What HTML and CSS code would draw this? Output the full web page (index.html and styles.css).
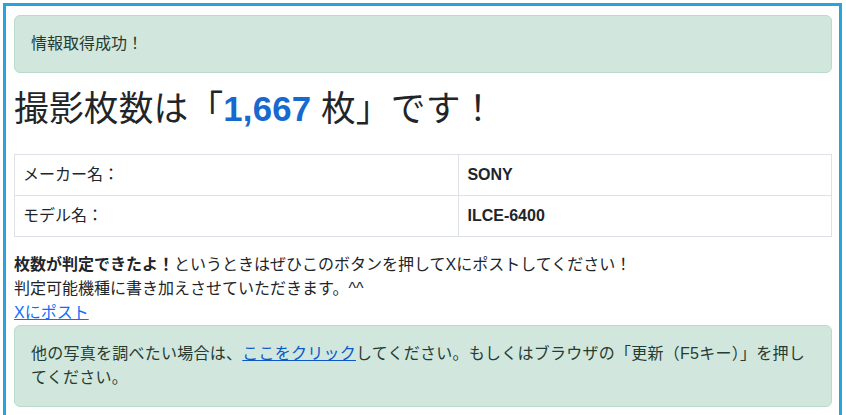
FILE: index.html
```html
<!DOCTYPE html>
<html lang="ja">
<head>
<meta charset="utf-8">
<title>撮影枚数</title>
<link rel="stylesheet" href="styles.css">
</head>
<body>
<div class="frame">
  <div class="alert">情報取得成功！</div>
  <h1 class="count">撮影枚数は「<span class="num">1,667</span> 枚」です！</h1>
  <table class="info">
    <tr><td>メーカー名：</td><th>SONY</th></tr>
    <tr><td>モデル名：</td><th>ILCE-6400</th></tr>
  </table>
  <p class="note"><b>枚数が判定できたよ！</b>というときはぜひこのボタンを押してXにポストしてください！<br>判定可能機種に書き加えさせていただきます。^^<br><a href="#">Xにポスト</a></p>
  <div class="alert alert-wide">他の写真を調べたい場合は、<a href="#">ここをクリック</a>してください。もしくはブラウザの「更新（F5キー）」を押してください。</div>
</div>
</body>
</html>
```

FILE: styles.css
```css
html, body {
  margin: 0;
  padding: 0;
  background: #fff;
}
body {
  font-family: "Liberation Sans", "Noto Sans CJK JP", sans-serif;
  font-size: 16px;
  line-height: 1.5;
  color: #212529;
}
.frame {
  margin: 3px 0 0 3px;
  width: 818px;
  height: 420px;
  border: 3px solid #29a3dc;
  border-bottom: none;
  padding: 9px 7px 0 8px;
  box-sizing: content-box;
  overflow: hidden;
}
.alert {
  background: #d1e7dd;
  border: 1px solid #badbcc;
  border-radius: 6px;
  padding: 16px;
  color: #263b31;
  margin-bottom: 16px;
}
.alert-wide {
  letter-spacing: 0.25px;
}
.alert a {
  color: #0a58ca;
}
.count {
  font-size: 34.7px;
  font-weight: 400;
  line-height: 1.2;
  margin: 2px 0 23px;
  color: #212529;
  letter-spacing: 0.2px;
}
.num {
  color: #1769cf;
  font-weight: 700;
}
.info {
  width: 100%;
  border-collapse: collapse;
  margin-bottom: 16px;
}
.info td, .info th {
  border: 1px solid #dee2e6;
  padding: 8px;
  text-align: left;
}
.info td {
  width: 54.4%;
}
.info th {
  font-weight: 700;
}
.note {
  margin: 0;
}
.note b {
  font-weight: 700;
}
.note a {
  color: #0d6efd;
}
```
